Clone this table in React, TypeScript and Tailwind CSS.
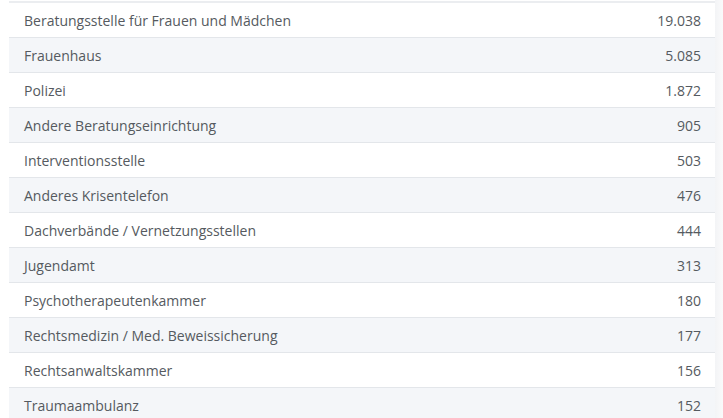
import React from "react";

const rows: [string, string][] = [
  ["Beratungsstelle für Frauen und Mädchen", "19.038"],
  ["Frauenhaus", "5.085"],
  ["Polizei", "1.872"],
  ["Andere Beratungseinrichtung", "905"],
  ["Interventionsstelle", "503"],
  ["Anderes Krisentelefon", "476"],
  ["Dachverbände / Vernetzungsstellen", "444"],
  ["Jugendamt", "313"],
  ["Psychotherapeutenkammer", "180"],
  ["Rechtsmedizin / Med. Beweissicherung", "177"],
  ["Rechtsanwaltskammer", "156"],
  ["Traumaambulanz", "152"],
];

export default function App() {
  return (
    <div
      className="w-[723px] h-[418px] overflow-hidden bg-white flex"
      style={{ fontFamily: '"Open Sans", sans-serif' }}
    >
      <div className="w-[9px] shrink-0" />
      <div className="w-[706px] shrink-0 mt-px border-t-2 border-[#ebedf0]">
        {rows.map(([label, value], i) => (
          <div
            key={label}
            className={`h-[35px] flex items-center justify-between pl-[15px] pr-[14px] border-b border-[#e3e6ea] text-[14px] text-[#555a60] ${
              i % 2 === 1 ? "bg-[#f4f6f9]" : "bg-white"
            }`}
          >
            <span>{label}</span>
            <span>{value}</span>
          </div>
        ))}
      </div>
      <div className="flex-1 bg-gradient-to-r from-[#f3f4f6] to-[#fafafb]" />
    </div>
  );
}
